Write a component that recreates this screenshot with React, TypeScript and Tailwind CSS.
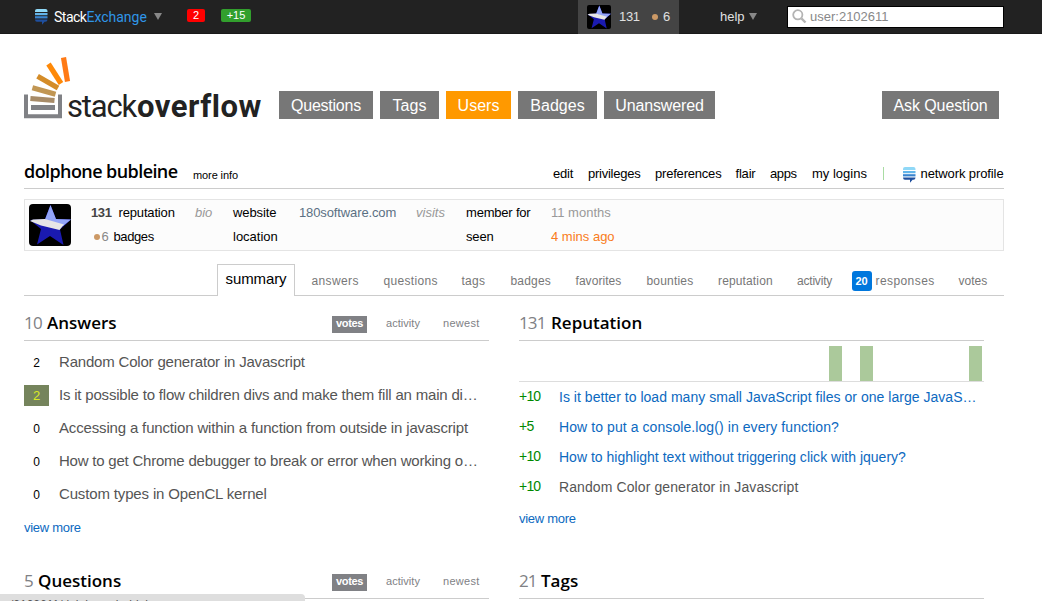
import React from 'react';

function ExchangeIcon({ className }: { className: string }) {
  return (
    <svg className={className} width="13" height="16" viewBox="0 0 13 16">
      <path d="M0 3V2Q0 0 2 0H10.500Q12.500 0 12.500 2V3Z" fill="#8fd8f7" />
      <rect x="0" y="4" width="12.500" height="2.200" fill="#63b5ea" />
      <rect x="0" y="7.200" width="12.500" height="2.200" fill="#3a85d0" />
      <path d="M0 10.400H12.500Q12.500 12.800 10.500 12.800H9.600L7 15.800V12.800H2Q0 12.800 0 10.400Z" fill="#1f4f9e" />
    </svg>
  );
}

function StarAvatar({ size, className }: { size: number; className: string }) {
  return (
    <svg className={className} width={size} height={size} viewBox="0 0 42 42">
      <rect width="42" height="42" fill="#000" />
      <path d="M21.500 1L27 15L42 15.500L31 25.500L34.500 41L21 32L8 40.500L12 25L1 16L16 15Z" fill="#1a1ab0" />
      <path d="M21.500 1L27 15L42 15.500L34 22L16 15.500Z" fill="#92a4f8" />
      <path d="M1 17L4 15.500L16 15L35 20.500L30.500 26L12 21.500Z" fill="#e6e6e6" />
    </svg>
  );
}

function Triangle({ className }: { className: string }) {
  return (
    <svg className={className} width="8" height="7" viewBox="0 0 8 7">
      <path d="M0 0H8L4 7Z" fill="#888" />
    </svg>
  );
}

function TopBar() {
  return (
    <header className="flex h-[34px] items-center border-b border-[#1a1a1a] bg-[#222] text-[13px] leading-4 text-[#e0e0e0]">
      <ExchangeIcon className="ml-[35px] mt-[1px] shrink-0" />
      <div className="ml-[6px] w-[100px] font-[Roboto] text-sm leading-4">
        <span className="tracking-[-0.5px] text-white">Stack</span>
        <span className="tracking-[0px] text-[#2f96e8]">Exchange</span>
      </div>
      <Triangle className="shrink-0" />
      <span className="ml-[25px] mt-[-2px] h-[13px] w-[18px] rounded-[2px] bg-[#f00] text-center text-[11px] leading-[13px] text-white">2</span>
      <span className="ml-4 mt-[-2px] h-[13px] w-[30px] rounded-[2px] bg-[#329f2d] text-center text-[11px] leading-[13px] text-white">+15</span>
      <div className="ml-[327px] flex h-[34px] w-[101px] items-center bg-[#444] pl-[9px]">
        <StarAvatar size={24} className="shrink-0 rounded-[2px]" />
        <span className="ml-2 w-[33px] tracking-[-0.3px]">131</span>
        <span className="size-[6px] rounded-full bg-[#cc9966]" />
        <span className="ml-[5px]">6</span>
      </div>
      <span className="ml-[41px] w-[29px]">help</span>
      <Triangle className="shrink-0" />
      <div className="ml-[30px] flex h-[22px] w-[217px] items-center border border-black bg-white pl-[4px] text-[#888]">
        <svg width="15" height="15" viewBox="0 0 15 15" fill="none" stroke="#b4b4b4">
          <circle cx="5.800" cy="5.800" r="4.600" strokeWidth="1.800" />
          <path d="M9.500 9.500L13.500 13.500" strokeWidth="2.400" />
        </svg>
        <span className="ml-[3px] mt-px">user:2102611</span>
      </div>
    </header>
  );
}

function Logo() {
  return (
    <div className="flex h-[62px] w-[255px] items-end">
      <svg className="shrink-0" width="48" height="62" viewBox="0 0 48 62">
        <path d="M2 37.500V59.200H36V37.500" fill="none" stroke="#808185" strokeWidth="4" />
        <rect x="7" y="48" width="24" height="5" fill="#808185" />
        <g strokeWidth="5.200">
          <path d="M6.400 41.500L30.500 43.500" stroke="#a78b68" />
          <path d="M8.400 30.800L31.500 37.200" stroke="#c19653" />
          <path d="M13.600 19.200L34 31" stroke="#d48c28" />
          <path d="M24.500 7L37 26.500" stroke="#fe8908" />
          <path d="M39.500 0.500L43.500 24.500" stroke="#ff7a15" />
        </g>
      </svg>
      <div className="-mb-[6px] -ml-[5px] flex items-end font-[Roboto] text-[31px] leading-[36px] text-[#222]">
        <span className="w-[70px] tracking-[-1.2px]">stack</span>
        <span className="font-bold tracking-[0.5px]">overflow</span>
      </div>
    </div>
  );
}

const NAV = [
  { label: 'Questions', cls: 'w-[94px] bg-[#777] tracking-[-0.25px]' },
  { label: 'Tags', cls: 'w-[59px] bg-[#777]' },
  { label: 'Users', cls: 'w-[65px] bg-[#f90]' },
  { label: 'Badges', cls: 'w-[79px] bg-[#777]' },
  { label: 'Unanswered', cls: 'w-[111px] bg-[#777] tracking-[-0.15px]' },
];

function MainHeader() {
  return (
    <div className="flex h-[62px] items-end">
      <Logo />
      <nav className="flex gap-[7px] text-center text-base leading-[30px] text-white">
        {NAV.map((n) => (
          <span key={n.label} className={`h-[28px] ${n.cls}`}>{n.label}</span>
        ))}
      </nav>
      <span className="ml-[167px] h-[28px] w-[117px] bg-[#777] text-center text-base leading-[30px] tracking-[-0.1px] text-white">
        Ask Question
      </span>
    </div>
  );
}

const LINKS = [
  { label: 'edit', cls: 'w-[35px] tracking-[-0.2px]' },
  { label: 'privileges', cls: 'w-[67px] tracking-[-0.25px]' },
  { label: 'preferences', cls: 'w-[80.500px] tracking-[-0.2px]' },
  { label: 'flair', cls: 'w-[34.500px] tracking-[-0.2px]' },
  { label: 'apps', cls: 'w-[42px] tracking-[-0.4px]' },
  { label: 'my logins', cls: 'w-[70.500px]' },
];

function ProfileHeader() {
  return (
    <div className="mt-[40px] flex h-[30px] items-start border-b border-[#ccc]">
      <h1 className="w-[169px] font-['Open_Sans'] text-[18px] font-semibold leading-6 tracking-[-0.58px]">dolphone bubleine</h1>
      <span className="mt-[8px] w-[360px] text-[11px] leading-4 tracking-[-0.1px]">more info</span>
      <div className="mt-[7px] flex text-[13px] leading-4">
        {LINKS.map((l) => (
          <span key={l.label} className={l.cls}>{l.label}</span>
        ))}
        <span className="mt-[1px] h-[13px] w-px bg-[#a9dca3]" />
        <ExchangeIcon className="ml-[19px] mt-[1px]" />
        <span className="ml-[5px] tracking-[-0.1px]">network profile</span>
      </div>
    </div>
  );
}

function ProfileCard() {
  return (
    <section className="mt-[10px] flex h-[52px] border border-[#e4e4e4] bg-[#fcfcfc] pl-[4px] pt-[4px] text-[13px] leading-6">
      <StarAvatar size={42} className="shrink-0 rounded-[4px]" />
      <div className="-mt-[3px] ml-5 w-[104px]">
        <div className="flex">
          <b className="w-[27.500px] tracking-[-0.4px] text-[#444]">131</b>
          <span className="tracking-[-0.16px]">reputation</span>
        </div>
        <div className="flex items-center">
          <span className="ml-[3px] size-[6px] rounded-full bg-[#cc9966]" />
          <span className="ml-[1.500px] w-[12px] text-[#888]">6</span>
          <span className="tracking-[-0.4px]">badges</span>
        </div>
      </div>
      <i className="-mt-[3px] w-[38px] text-[#999]">bio</i>
      <div className="-mt-[3px] w-[66px]">
        <div className="tracking-[-0.1px]">website</div>
        <div>location</div>
      </div>
      <div className="-mt-[3px] w-[117px] tracking-[-0.12px] text-[#5b7083]">180software.com</div>
      <i className="-mt-[3px] w-[50px] text-[#999]">visits</i>
      <div className="-mt-[3px] w-[85px]">
        <div className="tracking-[-0.2px]">member for</div>
        <div className="tracking-[-0.15px]">seen</div>
      </div>
      <div className="-mt-[3px]">
        <div className="text-[#999]">11 months</div>
        <div className="text-[#f97b20]">4 mins ago</div>
      </div>
    </section>
  );
}

const TABS = [
  { label: 'answers', cls: 'w-[72px] tracking-[0.37px]' },
  { label: 'questions', cls: 'w-[78px] tracking-[0.32px]' },
  { label: 'tags', cls: 'w-[49px] tracking-[0.25px]' },
  { label: 'badges', cls: 'w-[65px] tracking-[0.2px]' },
  { label: 'favorites', cls: 'w-[71px] tracking-[0.05px]' },
  { label: 'bounties', cls: 'w-[71.500px] tracking-[0.18px]' },
  { label: 'reputation', cls: 'w-[79px] tracking-[0.14px]' },
  { label: 'activity', cls: 'w-[54.500px] tracking-[-0.2px]' },
];

function Tabs() {
  return (
    <div className="mt-[13px] flex h-[32px] text-xs leading-4 text-[#777]">
      <div className="w-[193px] border-b border-[#ccc]" />
      <div className="w-[78px] border border-b-0 border-[#ccc] pt-[5px] text-center text-[15px] leading-[18px] tracking-[-0.1px] text-black">summary</div>
      <div className="flex flex-1 border-b border-[#ccc] pl-[16.500px] pt-[9px]">
        {TABS.map((t) => (
          <span key={t.label} className={t.cls}>{t.label}</span>
        ))}
        <span className="-mt-[2px] h-5 w-5 rounded-[3px] bg-[#0077dd] text-center text-[11px] font-bold leading-5 text-white">20</span>
        <span className="ml-[4px] w-[83px] tracking-[0.42px]">responses</span>
        <span>votes</span>
      </div>
    </div>
  );
}

function SectionHead({ count, title, countCls, filters }: { count: number; title: string; countCls: string; filters?: boolean }) {
  return (
    <div className="flex h-[35px] items-start border-b border-[#ccc]">
      <h2 className="flex flex-1 pt-[5px] font-['Open_Sans'] text-[17px] font-semibold leading-6">
        <span className={`font-medium text-[#808185] ${countCls}`}>{count}</span>
        {title}
      </h2>
      {filters && (
        <div className="mt-[10px] flex h-[17px] text-[11px] leading-[15px] text-[#808185]">
          <span className="w-[35px] bg-[#808185] text-center font-bold tracking-[-0.35px] text-white">votes</span>
          <span className="ml-[19px] w-[57px] tracking-[0.05px]">activity</span>
          <span className="w-[46px] tracking-[0.3px]">newest</span>
        </div>
      )}
    </div>
  );
}

const ANSWERS = [
  { votes: 2, title: 'Random Color generator in Javascript', cls: 'tracking-[-0.19px]' },
  { votes: 2, accepted: true, title: 'Is it possible to flow children divs and make them fill an main di…', cls: 'tracking-[-0.2px]' },
  { votes: 0, title: 'Accessing a function within a function from outside in javascript', cls: 'tracking-[-0.16px]' },
  { votes: 0, title: 'How to get Chrome debugger to break or error when working o…', cls: 'tracking-[-0.22px]' },
  { votes: 0, title: 'Custom types in OpenCL kernel', cls: 'tracking-[-0.15px]' },
];

const REPUTATION = [
  { delta: '+10', title: 'Is it better to load many small JavaScript files or one large JavaS…', cls: 'text-[#0c69bf] tracking-[0.03px]' },
  { delta: '+5', title: 'How to put a console.log() in every function?', cls: 'text-[#0c69bf] tracking-[0.08px]' },
  { delta: '+10', title: 'How to highlight text without triggering click with jquery?', cls: 'text-[#0c69bf] tracking-[0.01px]' },
  { delta: '+10', title: 'Random Color generator in Javascript', cls: 'text-[#555] tracking-[0.1px]' },
];

function AnswersPanel() {
  return (
    <section className="h-[258px]">
      <SectionHead count={10} title="Answers" countCls="w-[23px] tracking-[-0.8px]" filters />
      <div className="pt-[5px]">
        {ANSWERS.map((a) => (
          <div key={a.title} className="flex h-[33px] items-center whitespace-nowrap">
            <span
              className={
                a.accepted
                  ? 'mr-[10px] h-[21px] w-[25px] bg-[#75845c] text-center text-[13px] leading-[21px] text-[#d9ea25]'
                  : 'mr-[10px] h-[21px] w-[25px] text-center text-xs leading-[22px]'
              }
            >
              {a.votes}
            </span>
            <span className={`-mt-[2px] text-[15px] leading-5 text-[#555] ${a.cls}`}>{a.title}</span>
          </div>
        ))}
      </div>
      <div className="mt-[9px] text-[13px] leading-4 tracking-[-0.28px] text-[#0c69bf]">view more</div>
    </section>
  );
}

const BAR_DAYS = [20, 22, 29];

function ReputationPanel() {
  return (
    <section className="h-[258px]">
      <SectionHead count={131} title="Reputation" countCls="w-[32px] tracking-[-0.9px]" />
      <svg className="block" width="465" height="41" viewBox="0 0 465 41">
        {BAR_DAYS.map((d) => (
          <rect key={d} x={Math.round(d * 15.56 - 1.3)} y="5" width="13" height="35" fill="#abc99b" />
        ))}
        <rect y="40" width="465" height="1" fill="#ddd" />
      </svg>
      {REPUTATION.map((r) => (
        <div key={r.title} className="flex h-[30px] items-center whitespace-nowrap text-sm leading-4">
          <span className="mt-[-2px] w-[40px] tracking-[-0.8px] text-[#080]">{r.delta}</span>
          <span className={r.cls}>{r.title}</span>
        </div>
      ))}
      <div className="mt-[9px] text-[13px] leading-4 tracking-[-0.28px] text-[#0c69bf]">view more</div>
    </section>
  );
}

export default function App() {
  return (
    <div className="relative h-[606px] w-[1042px] overflow-hidden bg-white font-['Liberation_Sans',sans-serif] text-black">
      <TopBar />
      <main className="ml-[24px] w-[980px] pt-[23px]">
        <MainHeader />
        <ProfileHeader />
        <ProfileCard />
        <Tabs />
        <div className="mt-[10px] grid grid-cols-[465px_465px] gap-x-[30px]">
          <AnswersPanel />
          <ReputationPanel />
          <SectionHead count={5} title="Questions" countCls="w-[14px]" filters />
          <SectionHead count={21} title="Tags" countCls="w-[22px] tracking-[-0.9px]" />
        </div>
      </main>
      <div className="absolute left-0 top-[594px] h-[7px] w-[305px] overflow-hidden rounded-tr-[4px] bg-[#dedede] pl-[10px] pt-[4px] text-[12px] leading-[14px] text-[#555]">
        /2102611/dolphone-bubleine
      </div>
    </div>
  );
}
